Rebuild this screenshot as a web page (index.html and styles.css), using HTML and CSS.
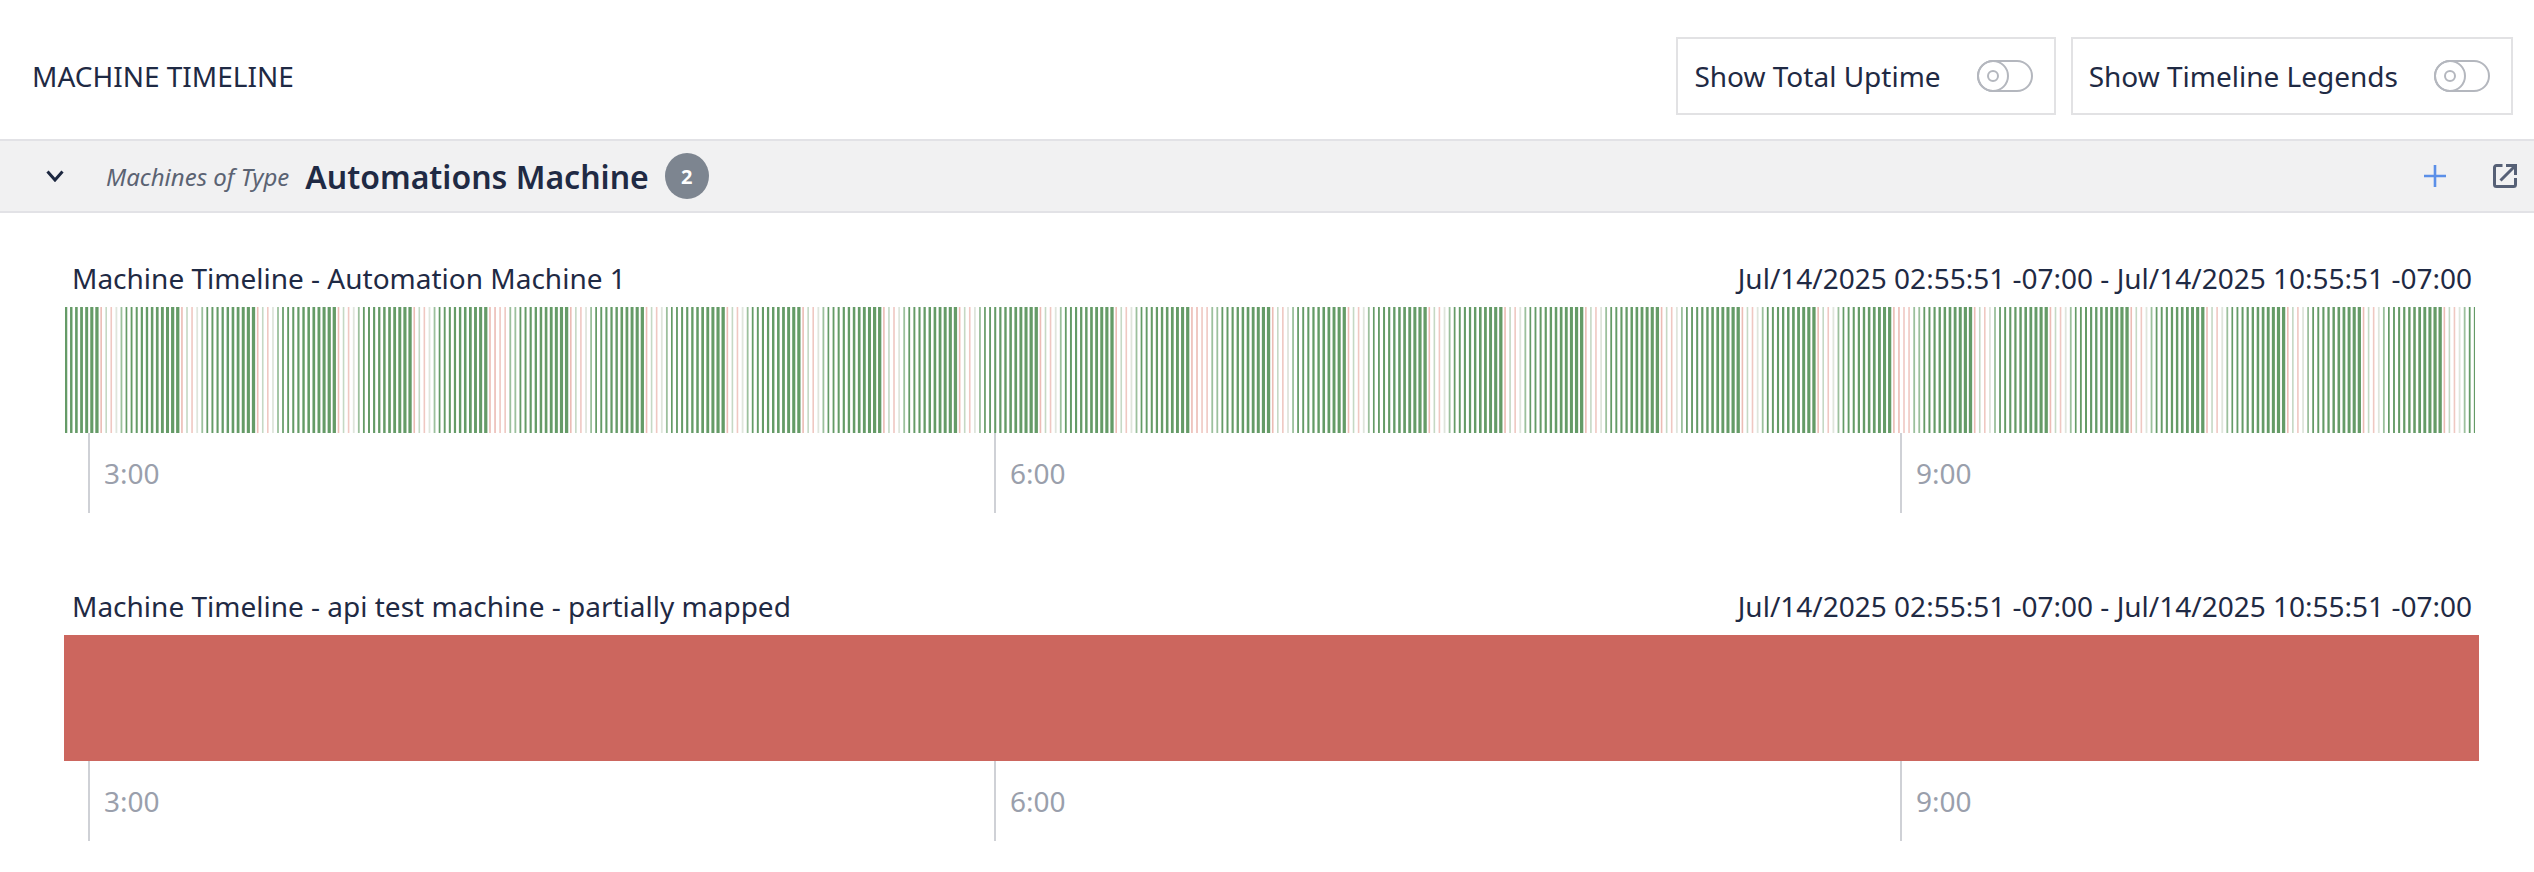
FILE: index.html
```html
<!DOCTYPE html>
<html lang="en">
<head>
<meta charset="utf-8">
<title>Machine Timeline</title>
<link rel="stylesheet" href="styles.css">
</head>
<body>
<header class="page-head">
  <h1 class="page-title">MACHINE TIMELINE</h1>
  <div class="toggles">
    <label class="toggle-box"><span>Show Total Uptime</span>
      <svg class="switch" viewBox="0 0 56 32"><rect x="1" y="1" width="54" height="30" rx="15"/><circle cx="16" cy="16" r="15"/><circle cx="16" cy="16" r="5"/></svg>
    </label>
    <label class="toggle-box"><span>Show Timeline Legends</span>
      <svg class="switch" viewBox="0 0 56 32"><rect x="1" y="1" width="54" height="30" rx="15"/><circle cx="16" cy="16" r="15"/><circle cx="16" cy="16" r="5"/></svg>
    </label>
  </div>
</header>
<section class="band">
  <svg class="chevron" viewBox="0 0 18 12"><path d="M1.500 1.500 9 10l7.500-8.500"/></svg>
  <em class="band-kicker">Machines of Type</em>
  <strong class="band-title">Automations Machine</strong>
  <span class="badge">2</span>
  <span class="band-spacer"></span>
  <svg class="plus" viewBox="0 0 22 22"><path d="M11 0v22M0 11h22"/></svg>
  <svg class="open" viewBox="0 0 24 24"><path d="M9.500 1.500H3.500a2 2 0 0 0-2 2v17a2 2 0 0 0 2 2h17a2 2 0 0 0 2-2v-6.500"/><path d="M13 1.500h9.500V11M22 2 7.500 16.500"/></svg>
</section>
<main class="charts">
  <article class="chart">
    <div class="chart-head"><span>Machine Timeline - Automation Machine 1</span><span>Jul/14/2025 02:55:51 -07:00 - Jul/14/2025 10:55:51 -07:00</span></div>
    <div class="bar bar-stripes"><svg id="stripes" class="stripes" width="2411" height="126"></svg></div>
    <div class="axis"><div class="tick">3:00</div><div class="tick">6:00</div><div class="tick">9:00</div></div>
  </article>
  <article class="chart">
    <div class="chart-head"><span>Machine Timeline - api test machine - partially mapped</span><span>Jul/14/2025 02:55:51 -07:00 - Jul/14/2025 10:55:51 -07:00</span></div>
    <div class="bar bar-down"></div>
    <div class="axis"><div class="tick">3:00</div><div class="tick">6:00</div><div class="tick">9:00</div></div>
  </article>
</main>
<script src="stripes.js"></script>
</body>
</html>
```
FILE: styles.css
```css
* { box-sizing: border-box; }
html, body { margin: 0; background: #fff; }
body { font-family: "Noto Sans", sans-serif; color: #1f2a44; font-size: 28px; height: 872px; overflow: hidden; }
.page-head { height: 139px; display: flex; align-items: center; justify-content: space-between; padding: 12px 21px 0 32px; }
.page-title { margin: 0; font-size: 28px; font-weight: 400; }
.toggles { display: flex; gap: 15px; }
.toggle-box { height: 78px; border: 2px solid #e2e2e4; display: flex; align-items: center; padding: 0 21px 0 16px; gap: 36px; }
.switch { width: 56px; height: 32px; display: block; fill: none; stroke: #b4b7be; stroke-width: 2; }
.band { height: 74px; border-top: 2px solid #e2e2e6; border-bottom: 2px solid #e2e2e6; background: #f1f1f2; display: flex; align-items: center; padding: 0 17px 0 46px; }
.chevron { width: 18px; height: 12px; fill: none; stroke: #1c2740; stroke-width: 3; }
.band-kicker { margin-left: 42px; font-size: 24px; color: #5b6373; }
.band-title { margin-left: 16px; font-size: 32px; font-weight: 600; }
.badge { margin-left: 16px; width: 44px; height: 46px; border-radius: 50%; background: #7d8590; color: #fff; font-size: 20px; font-weight: 700; display: flex; align-items: center; justify-content: center; }
.band-spacer { flex: 1; }
.plus { width: 22px; height: 22px; fill: none; stroke: #5b8fe8; stroke-width: 2.6; }
.open { width: 24px; height: 24px; margin-left: 47px; fill: none; stroke: #566076; stroke-width: 3; }
.charts { padding: 0 55px 0 64px; }
.chart-head { display: flex; justify-content: space-between; padding: 0 7px 0 8px; height: 44px; align-items: center; margin-bottom: 7px; }
.chart:first-child { padding-top: 43px; }
.chart + .chart { margin-top: 71px; }
.bar { height: 126px; }
.stripes { display: block; }
.bar-down { background: #cc665e; }
.axis { display: flex; padding-left: 24px; height: 80px; }
.tick { flex: none; width: 906px; border-left: 2px solid #cfd1d6; padding: 19px 0 0 14px; color: #9a9fac; font-size: 28px; line-height: 42px; }
.tick:last-child { flex: 1; width: auto; min-width: 0; }
```
FILE: stripes.js
```js
var svg = document.getElementById('stripes');
var NS = 'http://www.w3.org/2000/svg';
var PERIOD = 5.05, CYCLE = 78, FIRST_END = 35;
for (var i = 0; i * PERIOD < 2410; i++) {
  var x = i * PERIOD + 1;
  var rel = x - FIRST_END + CYCLE * 2;
  var phase = (rel % CYCLE) / CYCLE;
  var color = '#659b67';
  var w = Math.min(3.3, 0.8 + 2.6 * phase);
  if (phase < 0.07) { color = '#ecbcb5'; w = 1.6; }
  else if (phase < 0.13) { color = '#c5d8c4'; w = 1.6; }
  else if (phase < 0.2) { color = '#efc8c2'; w = 1.6; }
  else if (phase < 0.26) { color = '#dfe5dc'; w = 1.8; }
  else if (phase < 0.33) { color = '#9cc09d'; w = 1.8; }
  var r = document.createElementNS(NS, 'rect');
  r.setAttribute('x', x.toFixed(2));
  r.setAttribute('y', 0);
  r.setAttribute('width', w.toFixed(2));
  r.setAttribute('height', 126);
  r.setAttribute('fill', color);
  svg.appendChild(r);
}
```
